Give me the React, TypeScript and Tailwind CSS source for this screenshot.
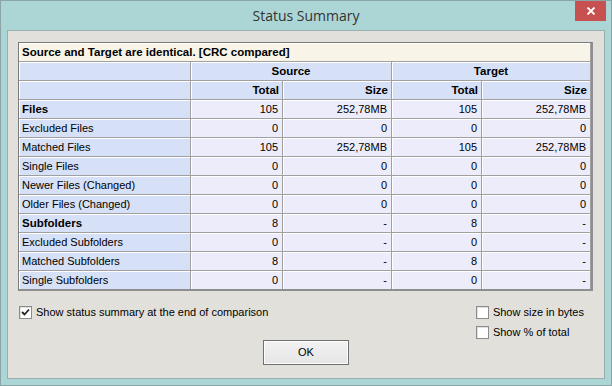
import React from 'react';

interface Row {
    label: string;
    bold?: boolean;
    values: string[];
}

const rows: Row[] = [
    { label: 'Files', bold: true, values: ['105', '252,78MB', '105', '252,78MB'] },
    { label: 'Excluded Files', values: ['0', '0', '0', '0'] },
    { label: 'Matched Files', values: ['105', '252,78MB', '105', '252,78MB'] },
    { label: 'Single Files', values: ['0', '0', '0', '0'] },
    { label: 'Newer Files (Changed)', values: ['0', '0', '0', '0'] },
    { label: 'Older Files (Changed)', values: ['0', '0', '0', '0'] },
    { label: 'Subfolders', bold: true, values: ['8', '-', '8', '-'] },
    { label: 'Excluded Subfolders', values: ['0', '-', '0', '-'] },
    { label: 'Matched Subfolders', values: ['8', '-', '8', '-'] },
    { label: 'Single Subfolders', values: ['0', '-', '0', '-'] },
];

const Checkbox: React.FC<{ checked?: boolean; label: string }> = ({ checked, label }) => (
    <div className="flex items-center gap-[4px] h-[13px]">
        <div className="w-[13px] h-[13px] border border-[#8c8c8c] bg-white flex items-center justify-center shadow-[inset_1px_1px_0_#e0e0e0]">
            {checked && (
                <svg width="9" height="9" viewBox="0 0 9 9">
                    <path d="M1 4 L3.5 6.5 L8 1.5" fill="none" stroke="#222" strokeWidth="1.8" />
                </svg>
            )}
        </div>
        <span className="text-[11px] leading-[13px] text-black">{label}</span>
    </div>
);

const App: React.FC = () => {
    const cell = 'h-[18px] leading-[18px] px-[3px] shadow-[inset_1px_1px_0_#ffffff] whitespace-nowrap';
    const bold = 'font-bold text-[11.5px]';
    const blue = 'bg-[#d6e0f6]';
    const lav = 'bg-[#ececfb]';

    return (
        <div className="w-[612px] h-[386px] bg-[#acd6d6] border border-[#8aa5a5] flex flex-col font-['Liberation_Sans',Arial,sans-serif]">
            {/* Title bar */}
            <div className="relative h-[29px] flex items-center justify-center">
                <span className="font-['Open_Sans',sans-serif] text-[14px] text-[#333] mt-[-1px]">Status Summary</span>
                <div className="absolute right-[5px] top-0 w-[31px] h-[20px] bg-[#c75050] flex items-center justify-center">
                    <svg width="10" height="8" viewBox="0 0 10 8">
                        <path d="M1.5 0.5 L8.5 7.5 M8.5 0.5 L1.5 7.5" stroke="#fff" strokeWidth="1.8" />
                    </svg>
                </div>
            </div>

            {/* Client */}
            <div className="mx-[6px] h-[349px] border border-[#97afaf] bg-[#e2e0db] pt-[11px] px-[10px]">
                <div className="w-[575px] border-t border-l border-[#7a7a7a] border-r-2 border-b-2 border-r-[#8e8e8e] border-b-[#8e8e8e]">
                    <div className="grid grid-cols-[171px_91px_108px_89px_108px] gap-px bg-[#a0a0a0] text-[11px] text-black">
                        <div className={`${cell} ${bold} col-span-5 bg-[#f8f4e8]`}>Source and Target are identical. [CRC compared]</div>

                        <div className={`${cell} ${blue}`} />
                        <div className={`${cell} ${blue} ${bold} col-span-2 text-center`}>Source</div>
                        <div className={`${cell} ${blue} ${bold} col-span-2 text-center`}>Target</div>

                        <div className={`${cell} ${blue}`} />
                        <div className={`${cell} ${blue} ${bold} text-right`}>Total</div>
                        <div className={`${cell} ${blue} ${bold} text-right`}>Size</div>
                        <div className={`${cell} ${blue} ${bold} text-right`}>Total</div>
                        <div className={`${cell} ${blue} ${bold} text-right`}>Size</div>

                        {rows.map((row) => (
                            <React.Fragment key={row.label}>
                                <div className={`${cell} ${blue} ${row.bold ? bold : ''}`}>{row.label}</div>
                                {row.values.map((v, i) => (
                                    <div key={i} className={`${cell} ${lav} text-right pr-[4px]`}>{v}</div>
                                ))}
                            </React.Fragment>
                        ))}
                    </div>
                </div>

                {/* Options */}
                <div className="flex justify-between mt-[15px] pr-[10px] pl-px">
                    <Checkbox checked label="Show status summary at the end of comparison" />
                    <div className="flex flex-col gap-[7px]">
                        <Checkbox label="Show size in bytes" />
                        <Checkbox label="Show % of total" />
                    </div>
                </div>

                <div className="flex justify-center mt-px">
                    <button className="w-[86px] h-[25px] border border-[#707070] bg-gradient-to-b from-[#f2f2f2] to-[#e5e5e5] text-[11px] text-black shadow-[inset_0_0_0_1px_#fcfcfc]">
                        OK
                    </button>
                </div>
            </div>
        </div>
    );
};

export default App;
